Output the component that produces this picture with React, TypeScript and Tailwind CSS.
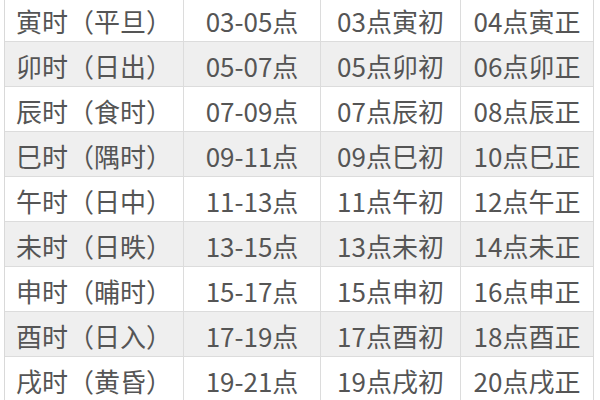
const rows = [
  ["寅时（平旦）", "03-05点", "03点寅初", "04点寅正"],
  ["卯时（日出）", "05-07点", "05点卯初", "06点卯正"],
  ["辰时（食时）", "07-09点", "07点辰初", "08点辰正"],
  ["巳时（隅时）", "09-11点", "09点巳初", "10点巳正"],
  ["午时（日中）", "11-13点", "11点午初", "12点午正"],
  ["未时（日昳）", "13-15点", "13点未初", "14点未正"],
  ["申时（晡时）", "15-17点", "15点申初", "16点申正"],
  ["酉时（日入）", "17-19点", "17点酉初", "18点酉正"],
  ["戌时（黄昏）", "19-21点", "19点戌初", "20点戌正"],
];

export default function App() {
  return (
    <div
      className="w-[600px] h-[400px] overflow-hidden bg-white pl-[4px]"
      style={{ fontFamily: '"Noto Sans CJK SC", "Noto Sans", sans-serif' }}
    >
      <div className="-mt-[3px] w-[590px] border-l border-r border-[#d9d9d9]">
        {rows.map((r, i) => (
          <div
            key={i}
            className={
              "grid grid-cols-[179px_137px_140px_132px] h-[45px] border-b border-[#dcdcdc] " +
              (i % 2 === 1 ? "bg-[#efefef]" : "bg-white")
            }
          >
            {r.map((c, j) => (
              <div
                key={j}
                className={
                  "flex items-center justify-center pt-[4px] text-[26px] leading-none text-[#555555] " +
                  (j < 3 ? "border-r border-[#dcdcdc]" : "")
                }
              >
                {c}
              </div>
            ))}
          </div>
        ))}
      </div>
    </div>
  );
}
